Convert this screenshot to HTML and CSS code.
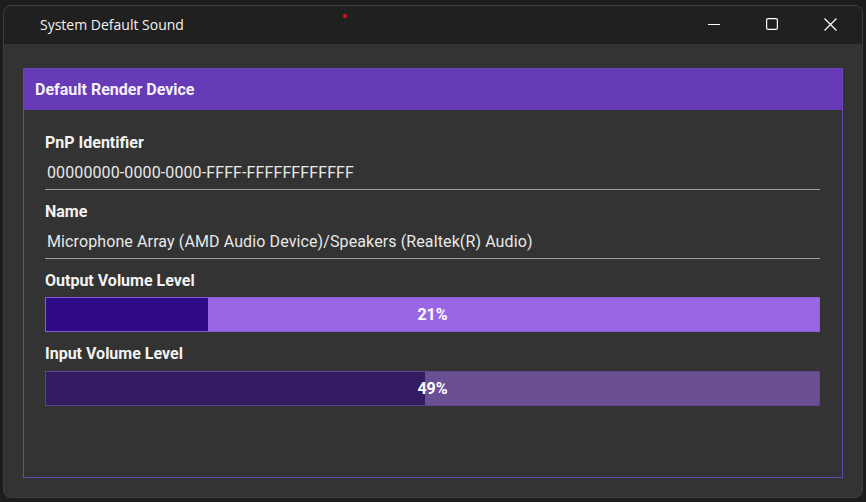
FILE: index.html
```html
<!DOCTYPE html>
<html lang="en">
<head>
<meta charset="utf-8">
<title>System Default Sound</title>
<link rel="stylesheet" href="styles.css">
</head>
<body>
<div class="window">
  <div class="titlebar">
    <div class="title">System Default Sound</div>
    <span class="dot"></span>
    <div class="controls">
      <div class="ctl">
        <svg width="12" height="12" viewBox="0 0 12 12"><path d="M0 6.5H12" stroke="#fff" stroke-width="1.2" fill="none"/></svg>
      </div>
      <div class="ctl">
        <svg width="12" height="12" viewBox="0 0 12 12"><rect x="0.6" y="0.6" width="10.8" height="10.8" rx="1.5" stroke="#fff" stroke-width="1.2" fill="none"/></svg>
      </div>
      <div class="ctl">
        <svg width="13" height="13" viewBox="0 0 13 13"><path d="M0.5 0.5L12.5 12.5M12.5 0.5L0.5 12.5" stroke="#fff" stroke-width="1.2" fill="none"/></svg>
      </div>
    </div>
  </div>
  <div class="content">
    <div class="group">
      <div class="group-header">Default Render Device</div>
      <div class="group-body">
        <div class="label">PnP Identifier</div>
        <div class="field">00000000-0000-0000-FFFF-FFFFFFFFFFFF</div>
        <div class="label gap">Name</div>
        <div class="field">Microphone Array (AMD Audio Device)/Speakers (Realtek(R) Audio)</div>
        <div class="label gap">Output Volume Level</div>
        <div class="bar bar-out">
          <div class="fill" style="width:21%"></div>
          <span class="pct">21%</span>
        </div>
        <div class="label gap">Input Volume Level</div>
        <div class="bar bar-in">
          <div class="fill" style="width:49%"></div>
          <span class="pct">49%</span>
        </div>
      </div>
    </div>
  </div>
</div>
</body>
</html>
```
FILE: styles.css
```css
html, body {
  margin: 0;
  padding: 0;
  background: #1d1d1d;
}
body {
  width: 866px;
  height: 502px;
  overflow: hidden;
  padding: 5px 0 0 3px;
  box-sizing: border-box;
}
.window {
  width: 860px;
  height: 493px;
  border: 1px solid #3d3d3d;
  border-radius: 8px;
  overflow: hidden;
  box-sizing: border-box;
  display: flex;
  flex-direction: column;
  background: #333333;
}
.titlebar {
  position: relative;
  height: 38px;
  flex: 0 0 38px;
  background: #202020;
  display: flex;
  align-items: center;
}
.title {
  padding-left: 36px;
  font-family: "Open Sans", "Noto Sans", sans-serif;
  font-size: 14px;
  color: #f2f2f2;
  flex: 1;
  margin-top: -2px;
}
.dot {
  position: absolute;
  left: 339px;
  top: 8px;
  width: 4px;
  height: 4px;
  border-radius: 50%;
  background: #e0141b;
}
.controls {
  display: flex;
  height: 100%;
  margin-right: 3px;
}
.ctl {
  width: 58px;
  height: 100%;
  display: flex;
  align-items: center;
  justify-content: center;
  margin-top: -1px;
}
.content {
  flex: 1;
  padding: 24px 19px 19px 19px;
  display: flex;
}
.group {
  flex: 1;
  border: 1px solid #6548b3;
  display: flex;
  flex-direction: column;
}
.group-header {
  height: 41px;
  background: #673ab7;
  color: #f3f0f8;
  font-family: Roboto, sans-serif;
  font-weight: 700;
  font-size: 16px;
  line-height: 41px;
  padding-left: 11px;
}
.group-body {
  padding: 23px 22px 0 21px;
  font-family: Roboto, sans-serif;
}
.label {
  font-weight: 700;
  font-size: 16px;
  line-height: 20px;
  color: #f2f2f2;
}
.label.gap {
  margin-top: 12px;
}
.label.gap2 {
  margin-top: 13px;
}
.field {
  font-size: 16px;
  line-height: 20px;
  letter-spacing: 0.11px;
  color: #e8e8e8;
  padding: 10px 0 6px 2px;
  border-bottom: 1px solid #9a9a9a;
}
.bar {
  position: relative;
  margin-top: 6px;
  height: 35px;
  box-sizing: border-box;
  display: flex;
  align-items: center;
  justify-content: center;
}
.bar-in {
  margin-top: 7px;
}
.bar .fill {
  position: absolute;
  left: 0;
  top: 0;
  bottom: 0;
}
.bar-out {
  background: #9966e6;
  border: 1px solid #8a5cd8;
}
.bar-out .fill {
  background: #2f0a86;
}
.bar-in {
  background: #6a4f95;
  border: 1px solid #5e468a;
}
.bar-in .fill {
  background: #331b62;
}
.pct {
  position: relative;
  color: #ffffff;
  font-weight: 700;
  font-size: 16px;
}
```
